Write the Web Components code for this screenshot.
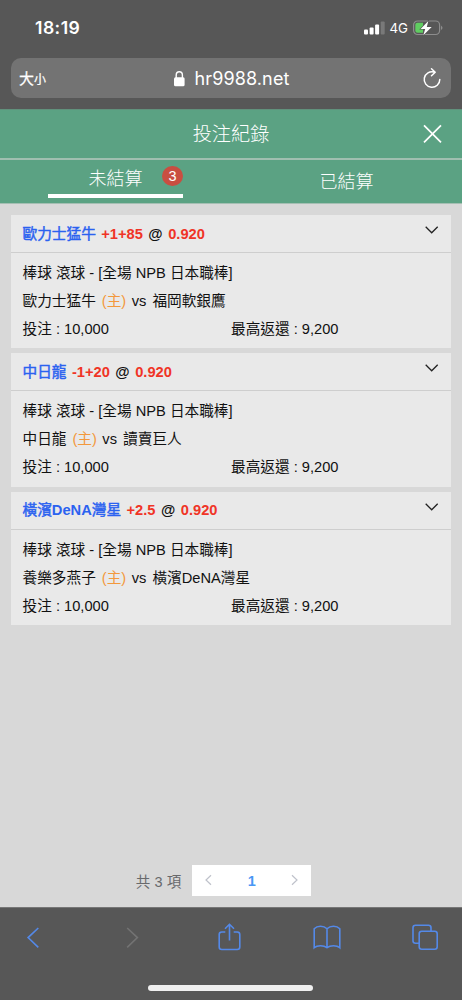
<!DOCTYPE html>
<html lang="zh-Hant">
<head>
<meta charset="utf-8">
<title>投注紀錄</title>
<style>
html,body{margin:0;height:100%}
body{font-family:"Liberation Sans","Noto Sans CJK TC",sans-serif;background:#d8d8d8;overflow:hidden}
</style>
</head>
<body>
<bet-app></bet-app>
<script>
const define = (name, css, html) => customElements.define(name, class extends HTMLElement {
  constructor() {
    super();
    const t = document.createElement('template');
    t.innerHTML = `<style>*{box-sizing:border-box}:host{display:block;box-sizing:border-box}svg{display:block;overflow:visible}${css}</style>${typeof html === 'function' ? html(this) : html}`;
    this.attachShadow({mode: 'open'}).append(t.content.cloneNode(true));
  }
});

define('status-bar', `
:host{height:58px;display:flex;align-items:flex-start;justify-content:space-between;padding:18px 19.5px 0 35px;color:#fff;font-family:Inter,sans-serif}
.time{font-size:17.6px;font-weight:600;line-height:20px;letter-spacing:.45px}
.right{display:flex;align-items:center;height:20px;gap:5px}
.net{font-size:13.3px;line-height:20px;font-weight:400;width:18px;white-space:nowrap}`, `
<span class="time">18:19</span>
<div class="right">
<svg width="21" height="13" viewBox="0 0 21 13"><g fill="#fff"><rect x="0" y="7.6" width="4" height="4.8" rx="1"/><rect x="5.6" y="5.4" width="4" height="7" rx="1"/><rect x="11.1" y="2.6" width="4" height="9.8" rx="1"/></g><rect x="16.7" y="-.4" width="4" height="12.8" rx="1" fill="#797979"/></svg>
<span class="net">4G</span>
<svg width="30" height="16" viewBox="0 0 30 16"><rect x=".6" y="1" width="26" height="13.5" rx="4" fill="none" stroke="#8d8d8d" stroke-width="1.2"/><path d="M28 5.4q3 2.3 0 4.6z" fill="#8d8d8d"/><path d="M4.5 2.7H10v10H4.5Q2.3 12.7 2.3 10.7V4.7q0-2 2.2-2z" fill="#60cd61"/><path d="M15.3 .9 7.6 8.9H12.2L10.3 15.2 18.7 6.9H13.8z" fill="#fff" stroke="#575757" stroke-width="1.2" paint-order="stroke"/></svg>
</div>`);

define('address-bar', `
:host{height:40px;margin:0 11px;background:#737373;border-radius:10px;color:#fff;display:grid;grid-template-columns:1fr auto 1fr;align-items:center;font-family:Inter,"Noto Sans CJK TC",sans-serif}
.size{padding:2px 0 0 8px;font-size:15px;font-weight:400;line-height:30px;-webkit-text-stroke:.25px #fff}
.size small{font-size:12px}
.url{display:flex;gap:9px;align-items:center;font-size:18px;letter-spacing:.12px;line-height:30px;height:38px;padding:1px 0 0 2px}
.reload{justify-self:end;margin-right:10px}`, `
<span class="size">大<small>小</small></span>
<span class="url"><svg width="11" height="16" viewBox="0 0 11 16"><rect x="0" y="6.3" width="10.6" height="9" rx="1.5" fill="#fff"/><path d="M2.2 7V4.2a3.1 3.4 0 0 1 6.2 0V7" fill="none" stroke="#fff" stroke-width="1.4"/></svg><slot></slot></span>
<svg class="reload" width="18" height="22" viewBox="0 0 18 22" fill="none" stroke="#fff" stroke-width="1.5" stroke-linecap="round" stroke-linejoin="round"><path d="M11.2 5A7.8 7.8 0 1 0 16.8 12.5M8.5 1.7 12.2 5.2 8.5 8.8"/></svg>`);

define('page-title', `
:host{height:49px;display:grid;grid-template-columns:1fr auto 1fr;align-items:center;background:#5ba283;color:#fff;border-top:1px solid #61917c;font-size:19.2px;line-height:28px;font-weight:300}
b{font-weight:inherit;grid-column:2;padding-top:2px}
svg{justify-self:end;margin-right:20px}`, `
<b><slot></slot></b><svg width="19" height="19" viewBox="0 0 19 19" stroke="#fff" stroke-width="1.7"><path d="M1 .3 18 17.3M18 .3 1 17.3"/></svg>`);

define('tab-item', `
:host{flex:1;display:flex;justify-content:center;align-items:flex-start;color:#fff;font-size:18px;line-height:26px;font-weight:300;padding-top:9px}
:host([active]){padding-top:6px}
:host([active]) .tab{border-bottom:4px solid #fff;height:32px}
.tab{width:135px;text-align:center;position:relative}
.badge{position:absolute;right:0;top:-.5px;width:21px;height:20.5px;border-radius:50%;background:#c94e41;font-size:14.5px;line-height:21px;font-weight:400}`,
el => `<div class="tab"><slot></slot>${el.getAttribute('count') ? `<span class="badge">${el.getAttribute('count')}</span>` : ''}</div>`);

define('tab-strip', `:host{height:46px;display:flex;background:#5ba283;border-top:2px solid #a0bfb0;border-bottom:1px solid #a5bfb3}`, `<slot></slot>`);

define('bet-card', `
:host{height:133.2px;background:#e9e9e9;color:#111;font-size:14.67px}
header{height:38px;border-bottom:1px solid #cecece;display:flex;align-items:center;padding:0 12.5px 0 11.5px;line-height:28px;color:#f03426;font-weight:700;white-space:pre}
.team{color:#2b62f0}
.cjk{font-weight:400;-webkit-text-stroke:.45px #2b62f0}
.at{color:#111;margin:0 1.6px 0 1.3px}
header span{flex:none}
header svg{margin:-7px 0 0 auto}
.body{padding:6px 11.5px 0;line-height:28px;white-space:nowrap}
.home{color:#f3983c;margin:0 1.4px 0 1.9px}
.away{margin-left:2px}
.money{display:grid;grid-template-columns:208.5px 1fr}
.body>div{height:28px}`,
el => { const a = n => el.getAttribute(n); return `
<header><span class="team">${a('pick').replace(/[^\x00-\x7f]+/g, '<span class="cjk">$&</span>')}</span><span class="odds" style="margin-left:5.5px">${a('line')} </span><span class="at">@ </span><span>${a('odds')}</span>
<svg width="14" height="8" viewBox="0 0 14 8" fill="none" stroke="#222" stroke-width="1.3"><path d="M.7 .8 6.7 6.8 12.7 .8"/></svg></header>
<div class="body"><div>棒球 滾球 - [全場 NPB 日本職棒]</div><div>${a('home')} <span class="home">(主)</span> vs <span class="away">${a('away')}</span></div><div class="money"><span>投注 : 10,000</span><span>最高返還 : 9,200</span></div></div>`; });

define('page-nav', `
:host{display:flex;align-items:center;justify-content:center;height:31px;color:#68696c;font-size:14.5px;margin-right:15px}
.total{margin-right:11px;letter-spacing:.1px}
.box{width:119px;height:31px;background:#fff;display:grid;grid-template-columns:32px 1fr 32px;place-items:center;color:#4a97f5;font-weight:700}`, `
<span class="total">共 3 項</span><div class="box"><svg width="7" height="11" viewBox="0 0 7 11" fill="none" stroke="#bfc2cb" stroke-width="1.2"><path d="M6 .2 1 5 6 9.8"/></svg><span>1</span><svg width="7" height="11" viewBox="0 0 7 11" fill="none" stroke="#bfc2cb" stroke-width="1.2"><path d="M0 .2 5 5 0 9.8"/></svg></div>`);

define('browser-toolbar', `
:host{height:93px;background:#575757;border-top:1px solid #777;display:flex;flex-direction:column}
.icons{display:grid;grid-template-columns:repeat(5,28px);column-gap:70px;place-items:center;height:60px;padding-left:19px;color:#5489e8}
svg{fill:none;stroke:currentColor;stroke-width:1.6}
.off{color:#737373}
.home{width:165px;height:5.5px;border-radius:3px;background:#efefef;margin:17px 0 0 148px}`, `
<div class="icons">
<svg width="13" height="21" viewBox="0 0 13 21"><path d="M11.3 0 1.1 9.6 11.3 19.3"/></svg>
<svg class="off" width="13" height="21" viewBox="0 0 13 21"><path d="M2.2 0 12.4 9.6 2.2 19.3"/></svg>
<svg width="23" height="28" viewBox="0 0 23 28"><path d="M7.3 8H3.8Q1.2 8 1.2 10.5V23Q1.2 25.5 3.8 25.5H19.2Q21.8 25.5 21.8 23V10.5Q21.8 8 19.2 8H15.7M11.5 16.5V.3M7 4.8 11.5 .3 16 4.8"/></svg>
<svg width="28" height="24" viewBox="0 0 28 24"><path d="M14 2.7Q11.5.2 7.5.2Q3.5.2 1.2 2.7V21.7Q3.5 19.7 7.5 19.7Q11.5 19.7 14 21.7Q16.5 19.7 20.5 19.7Q24.5 19.7 26.8 21.7V2.7Q24.5.2 20.5.2Q16.5.2 14 2.7V21.7"/></svg>
<svg width="26" height="26" viewBox="0 0 26 26"><rect x="7.2" y="6.3" width="18" height="18" rx="2.5"/><path d="M7 18.3H3.5Q1 18.3 1 15.8V2.8Q1 .3 3.5 .3H16.5Q19 .3 19 2.8V6.3"/></svg>
</div><div class="home"></div>`);

define('bet-app', `
:host{width:462px;height:1000px;display:flex;flex-direction:column;background:#d8d8d8}
.chrome{height:109px;background:#575757}
main{flex:1;display:flex;flex-direction:column;padding:11px 11px 11px}
.cards{display:flex;flex-direction:column;gap:5.2px}
page-nav{margin-top:auto}`, `
<div class="chrome"><status-bar></status-bar><address-bar>hr9988.net</address-bar></div>
<page-title>投注紀錄</page-title>
<tab-strip><tab-item active count="3">未結算</tab-item><tab-item>已結算</tab-item></tab-strip>
<main><div class="cards">
<bet-card pick="歐力士猛牛" line="+1+85" odds="0.920" home="歐力士猛牛" away="福岡軟銀鷹"></bet-card>
<bet-card pick="中日龍" line="-1+20" odds="0.920" home="中日龍" away="讀賣巨人"></bet-card>
<bet-card pick="橫濱DeNA灣星" line="+2.5" odds="0.920" home="養樂多燕子" away="橫濱DeNA灣星"></bet-card>
</div><page-nav></page-nav></main>
<browser-toolbar></browser-toolbar>`);
</script>
</body>
</html>
